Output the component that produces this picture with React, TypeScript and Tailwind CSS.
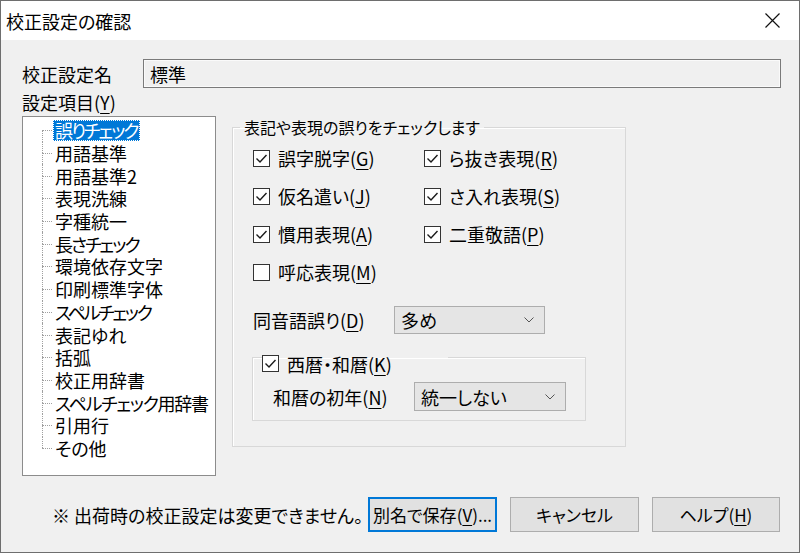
import React from "react";

const F = "font-['Noto_Sans_CJK_JP','Noto_Sans_CJK_JP',sans-serif] [font-feature-settings:'palt']";

function AK({ label, k, tail }: { label: string; k: string; tail?: string }) {
  return (
    <>
      {label}(<span className="underline underline-offset-[3px] decoration-1">{k}</span>){tail}
    </>
  );
}

function Check({ checked }: { checked: boolean }) {
  return (
    <span className="w-[17px] h-[17px] border border-[#333333] bg-white flex items-center justify-center shrink-0">
      {checked && (
        <svg width="15" height="15" viewBox="0 0 15 15">
          <path d="M2.5 7.5 L6 11 L12.5 4" stroke="#1a1a1a" strokeWidth="1.4" fill="none" />
        </svg>
      )}
    </span>
  );
}

function CheckRow({ checked, label, k }: { checked: boolean; label: string; k: string }) {
  return (
    <div className="flex items-center h-[38px] gap-[8px]">
      <Check checked={checked} />
      <span className="leading-none text-[18px] whitespace-nowrap">
        <AK label={label} k={k} />
      </span>
    </div>
  );
}

function Chevron() {
  return (
    <svg width="10" height="6" viewBox="0 0 10 6">
      <path d="M0.5 0.5 L5 5 L9.5 0.5" stroke="#555" strokeWidth="1" fill="none" />
    </svg>
  );
}

function Select({ value, w, h }: { value: string; w: string; h: string }) {
  return (
    <div className={`${w} ${h} bg-[#e5e5e5] border border-[#adadad] flex items-center justify-between pl-[6px] pr-[10px]`}>
      <span className="text-[18px] leading-none whitespace-nowrap">{value}</span>
      <Chevron />
    </div>
  );
}

const items: { t: string; c: string }[] = [
  { t: "誤りチェック", c: "tracking-[-2px]" },
  { t: "用語基準", c: "" },
  { t: "用語基準2", c: "" },
  { t: "表現洗練", c: "" },
  { t: "字種統一", c: "" },
  { t: "長さチェック", c: "tracking-[-2px]" },
  { t: "環境依存文字", c: "" },
  { t: "印刷標準字体", c: "" },
  { t: "スペルチェック", c: "tracking-[-2.3px]" },
  { t: "表記ゆれ", c: "" },
  { t: "括弧", c: "" },
  { t: "校正用辞書", c: "" },
  { t: "スペルチェック用辞書", c: "tracking-[-1.3px]" },
  { t: "引用行", c: "" },
  { t: "その他", c: "" },
];

export default function App() {
  return (
    <div className={`${F} w-[800px] h-[554px] bg-white text-black`}>
      <div className="w-[800px] h-[553px] border border-[#6e6e6e] bg-[#f0f0f0] flex flex-col">
        {/* title bar */}
        <div className="h-[39px] bg-white flex items-center justify-between pl-[5px] pr-[19px]">
          <span className="text-[18px] leading-none whitespace-nowrap">校正設定の確認</span>
          <svg width="15" height="15" viewBox="0 0 15 15">
            <path d="M0.5 0.5 L14.5 14.5 M14.5 0.5 L0.5 14.5" stroke="#111" strokeWidth="1.2" />
          </svg>
        </div>

        <div className="pl-[21px] flex flex-col">
          {/* name row */}
          <div className="mt-[19px] h-[29px] flex items-center">
            <span className="w-[121px] text-[18px] leading-none whitespace-nowrap">校正設定名</span>
            <div className="w-[638px] h-[29px] border border-[#7a7a7a] shadow-[inset_0_0_0_1px_#fafafa] bg-[#f0f0f0] flex items-center pl-[6px]">
              <span className="text-[18px] leading-none">標準</span>
            </div>
          </div>
          <div className="h-[28px] flex items-center">
            <span className="text-[18px] leading-none whitespace-nowrap">
              <AK label="設定項目" k="Y" />
            </span>
          </div>

          {/* main */}
          <div className="flex items-start">
            <div className="w-[194px] h-[360px] bg-white border border-[#8c8c8c] pt-[2px] flex flex-col overflow-hidden">
              {items.map((it, i) => (
                <div key={it.t} className="h-[22.7px] flex items-stretch">
                  <div className="w-[19px] shrink-0" />
                  <div className="w-[10px] shrink-0 flex flex-col">
                    <div className={`h-1/2 ${i === 0 ? "" : "border-l border-dotted border-[#a0a0a0]"}`} />
                    <div
                      className={`h-1/2 border-t border-dotted border-[#a0a0a0] ${
                        i === items.length - 1 ? "" : "border-l"
                      }`}
                    />
                  </div>
                  <div className="w-[1px] shrink-0" />
                  <div className="flex items-center">
                    {i === 0 ? (
                      <span className={`h-[21px] bg-[#0078d7] text-white px-[2px] flex items-center outline-1 outline-dotted outline-[#ffffff] -outline-offset-1 text-[18px] leading-none whitespace-nowrap ${it.c}`}>
                        {it.t}
                      </span>
                    ) : (
                      <span className={`px-[2px] text-[18px] leading-none whitespace-nowrap ${it.c}`}>{it.t}</span>
                    )}
                  </div>
                </div>
              ))}
            </div>

            <fieldset className="ml-[16px] mt-[1px] w-[394px] border border-[#d8d8d8] shadow-[inset_1px_1px_0_#ffffff] pl-[20px] pt-[2px] pb-[25px]">
              <legend className="-ml-[13px] px-[4px] h-[20px] text-[16px] leading-none flex items-center whitespace-nowrap">
                表記や表現の誤りをチェックします
              </legend>
              <div className="grid grid-cols-[171px_1fr]">
                <CheckRow checked label="誤字脱字" k="G" />
                <CheckRow checked label="ら抜き表現" k="R" />
                <CheckRow checked label="仮名遣い" k="J" />
                <CheckRow checked label="さ入れ表現" k="S" />
                <CheckRow checked label="慣用表現" k="A" />
                <CheckRow checked label="二重敬語" k="P" />
                <CheckRow checked={false} label="呼応表現" k="M" />
              </div>
              <div className="mt-[15px] h-[28px] flex items-center">
                <span className="w-[141px] text-[18px] leading-none whitespace-nowrap">
                  <AK label="同音語誤り" k="D" />
                </span>
                <Select value="多め" w="w-[151px]" h="h-[28px]" />
              </div>
              <fieldset className="mt-[8px] -ml-[1px] w-[334px] border border-[#d8d8d8] shadow-[inset_1px_1px_0_#ffffff] pl-[20px] pb-[9px]">
                <legend className="-ml-[11px] w-[186px] h-[30px] flex items-end">
                  <div className="flex items-center gap-[8px] h-[17px]">
                    <Check checked />
                    <span className="text-[18px] leading-none whitespace-nowrap">
                      <AK label="西暦・和暦" k="K" />
                    </span>
                  </div>
                </legend>
                <div className="mt-[10px] h-[29px] flex items-center">
                  <span className="w-[141px] text-[18px] leading-none whitespace-nowrap">
                    <AK label="和暦の初年" k="N" />
                  </span>
                  <Select value="統一しない" w="w-[152px]" h="h-[29px]" />
                </div>
              </fieldset>
            </fieldset>
          </div>
        </div>

        {/* bottom */}
        <div className="mt-[21px] h-[35px] flex items-center pl-[51px] pr-[19px]">
          <span className="text-[18px] leading-none whitespace-nowrap">※ 出荷時の校正設定は変更できません。</span>
          <div className="ml-auto flex gap-[13px]">
            <div className="w-[129px] h-[35px] bg-[#e1e1e1] border-2 border-[#0078d7] flex items-center justify-center overflow-hidden">
              <span className="text-[17px] leading-none whitespace-nowrap">
                <AK label="別名で保存" k="V" tail="..." />
              </span>
            </div>
            <div className="w-[129px] h-[35px] bg-[#e1e1e1] border border-[#adadad] flex items-center justify-center">
              <span className="text-[17px] leading-none whitespace-nowrap">キャンセル</span>
            </div>
            <div className="w-[128px] h-[35px] bg-[#e1e1e1] border border-[#adadad] flex items-center justify-center">
              <span className="text-[17px] leading-none whitespace-nowrap">
                <AK label="ヘルプ" k="H" />
              </span>
            </div>
          </div>
        </div>
      </div>
    </div>
  );
}
